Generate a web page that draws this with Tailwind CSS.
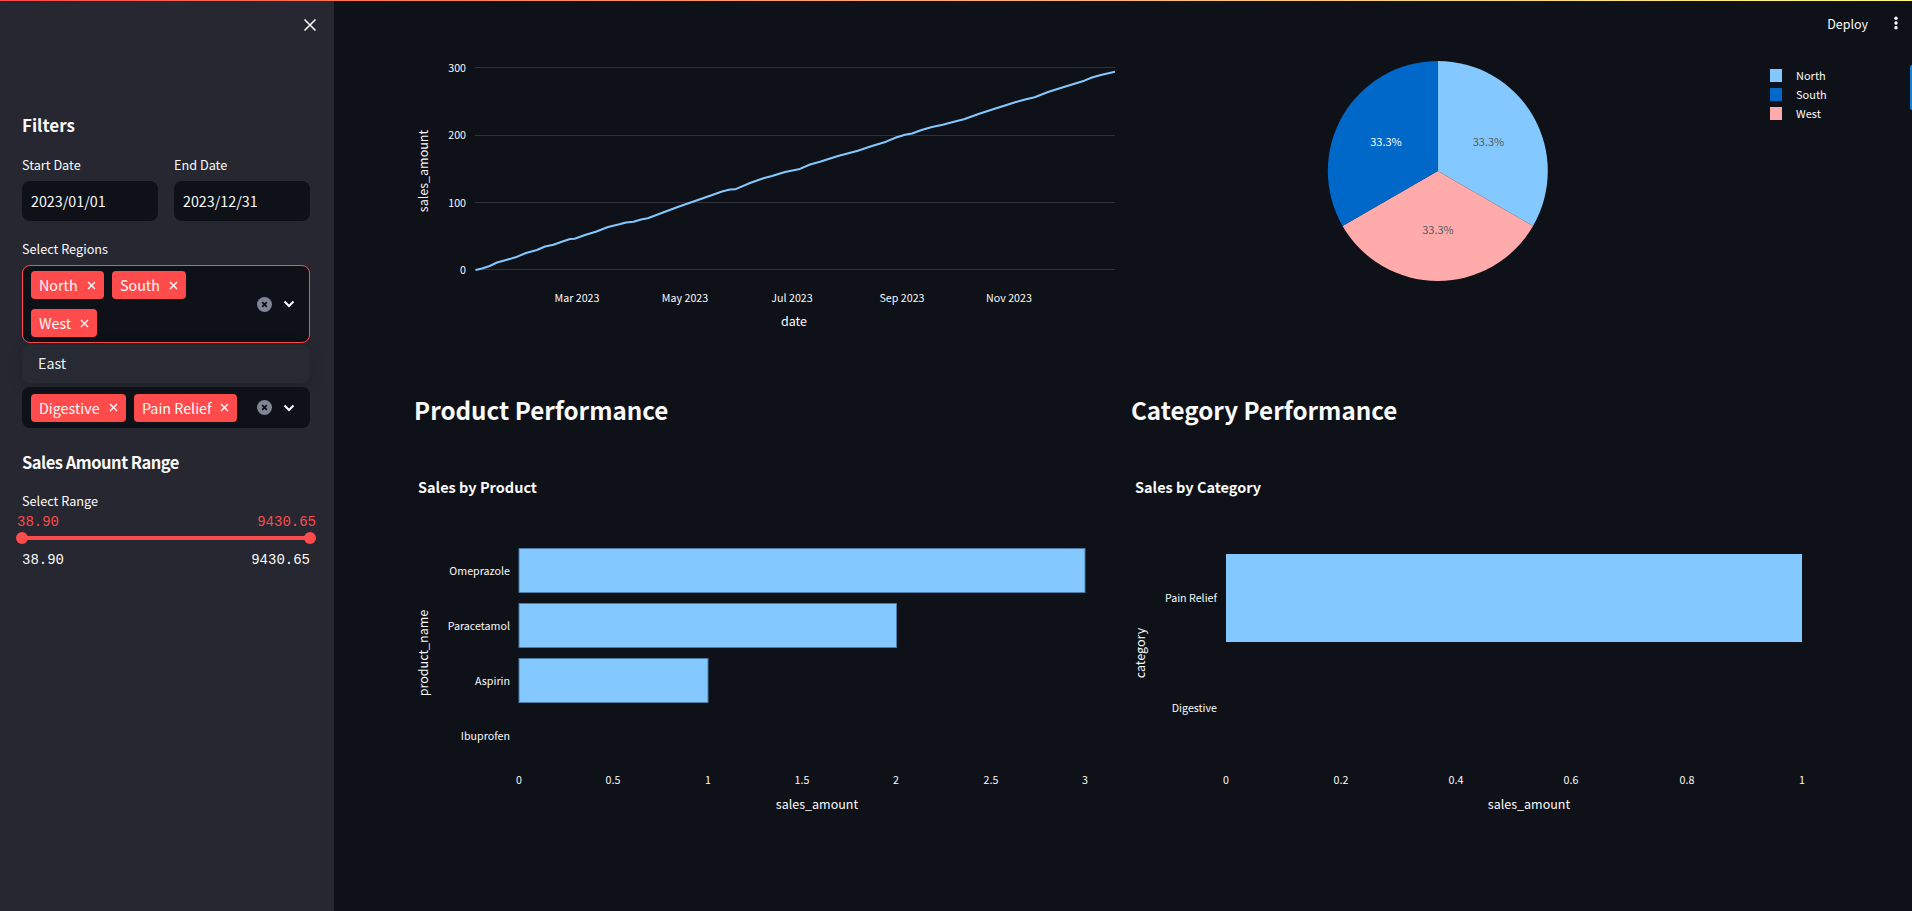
<!DOCTYPE html>
<html lang="en">
<head>
    <meta charset="UTF-8">
    <title>Sales Dashboard</title>
    <script src="https://cdn.jsdelivr.net/npm/@tailwindcss/browser@4"></script>
</head>
<body class="bg-[#0e1117] text-[#fafafa] font-['Noto_Sans_CJK_SC','Liberation_Sans',sans-serif] overflow-hidden">
    <div class="absolute top-0 left-0 w-full h-[1px] z-10 bg-gradient-to-r from-[#ff4b4b] to-[#fffd80]"></div>

    <div class="flex h-[911px] w-[1912px]">
        <!-- sidebar -->
        <aside class="relative w-[334px] shrink-0 bg-[#262730] pl-[22px] pr-[24px] pt-[109px]">
            <button class="absolute left-[303px] top-[18px]">
                <svg width="14" height="14" viewBox="0 0 14 14" fill="none" stroke="#fafafa" stroke-width="1.6"><path d="M1.5 1.5l11 11M12.5 1.5l-11 11"/></svg>
            </button>

            <h2 class="h-[32px] text-[17px] leading-[32px] font-semibold">Filters</h2>

            <div class="mt-[13px] grid grid-cols-2 gap-4">
                <div>
                    <label class="block h-[22px] mb-[5px] text-[12.7px] leading-[22px]">Start Date</label>
                    <div class="h-[40px] rounded-lg bg-[#0e1117] px-[9px] text-[14.3px] leading-[39px]">2023/01/01</div>
                </div>
                <div>
                    <label class="block h-[22px] mb-[5px] text-[12.7px] leading-[22px]">End Date</label>
                    <div class="h-[40px] rounded-lg bg-[#0e1117] px-[9px] text-[14.3px] leading-[39px]">2023/12/31</div>
                </div>
            </div>

            <label class="block mt-[17px] h-[22px] mb-[5px] text-[12.7px] leading-[22px]">Select Regions</label>
            <div class="flex h-[78px] rounded-lg border border-[#ff4b4b] bg-[#0e1117] pl-[8px] pt-[5px]">
                <div class="flex flex-wrap content-start gap-x-2 gap-y-[10px] w-[210px]">
                    <span class="flex items-center justify-between h-[28px] w-[73px] rounded bg-[#ff4b4b] pl-[8px] pr-[8px] text-[14.3px]">North
                        <svg width="9" height="9" viewBox="0 0 9 9" fill="none" stroke="#fff" stroke-width="1.4"><path d="M1 1l7 7M8 1l-7 7"/></svg>
                    </span>
                    <span class="flex items-center justify-between h-[28px] w-[74px] rounded bg-[#ff4b4b] pl-[8px] pr-[8px] text-[14.3px]">South
                        <svg width="9" height="9" viewBox="0 0 9 9" fill="none" stroke="#fff" stroke-width="1.4"><path d="M1 1l7 7M8 1l-7 7"/></svg>
                    </span>
                    <span class="flex items-center justify-between h-[28px] w-[66px] rounded bg-[#ff4b4b] pl-[8px] pr-[8px] text-[14.3px]">West
                        <svg width="9" height="9" viewBox="0 0 9 9" fill="none" stroke="#fff" stroke-width="1.4"><path d="M1 1l7 7M8 1l-7 7"/></svg>
                    </span>
                </div>
                <div class="flex items-center gap-[11px] ml-[16px] mb-[5px]">
                    <svg width="15" height="15" viewBox="0 0 15 15"><circle cx="7.5" cy="7.5" r="7.5" fill="#808495"/><path d="M5.2 5.2l4.6 4.6M9.8 5.2l-4.6 4.6" stroke="#0e1117" stroke-width="1.8"/></svg>
                    <svg width="12" height="8" viewBox="0 0 12 8" fill="none" stroke="#fafafa" stroke-width="2"><path d="M1.5 1.5L6 6l4.5-4.5"/></svg>
                </div>
            </div>

            <div class="mt-[2px] h-[38px] rounded-lg bg-[#282a33] px-[16px] text-[14.3px] leading-[35px] text-[#eeeeee] shadow-[0_4px_16px_rgba(0,0,0,0.16)]">East</div>

            <div class="relative mt-[4px] flex h-[41px] items-center rounded-lg bg-[#0e1117] pl-[9px]">
                <div class="flex gap-2 w-[210px]">
                    <span class="flex items-center justify-between h-[28px] w-[95px] rounded bg-[#ff4b4b] pl-[8px] pr-[8px] text-[14.3px]">Digestive
                        <svg width="9" height="9" viewBox="0 0 9 9" fill="none" stroke="#fff" stroke-width="1.4"><path d="M1 1l7 7M8 1l-7 7"/></svg>
                    </span>
                    <span class="flex items-center justify-between h-[28px] w-[103px] rounded bg-[#ff4b4b] pl-[8px] pr-[8px] text-[14.3px] shrink-0">Pain Relief
                        <svg width="9" height="9" viewBox="0 0 9 9" fill="none" stroke="#fff" stroke-width="1.4"><path d="M1 1l7 7M8 1l-7 7"/></svg>
                    </span>
                </div>
                <div class="flex items-center gap-[11px] ml-[16px]">
                    <svg width="15" height="15" viewBox="0 0 15 15"><circle cx="7.5" cy="7.5" r="7.5" fill="#808495"/><path d="M5.2 5.2l4.6 4.6M9.8 5.2l-4.6 4.6" stroke="#0e1117" stroke-width="1.8"/></svg>
                    <svg width="12" height="8" viewBox="0 0 12 8" fill="none" stroke="#fafafa" stroke-width="2"><path d="M1.5 1.5L6 6l4.5-4.5"/></svg>
                </div>
            </div>

            <h3 class="mt-[18px] h-[32px] text-[16.5px] leading-[32px] tracking-[-0.5px] font-semibold">Sales Amount Range</h3>
            <label class="block mt-[12px] h-[22px] text-[12.7px] leading-[22px]">Select Range</label>

            <div class="relative h-[38px] font-['Liberation_Mono',monospace] text-[14px] leading-[20px]">
                <span class="absolute left-[-5px] top-0 text-[#ff4b4b]">38.90</span>
                <span class="absolute right-[-6px] top-0 text-[#ff4b4b]">9430.65</span>
                <div class="absolute left-0 right-0 top-[24px] h-[4px] bg-[#ff4b4b]"></div>
                <div class="absolute left-[-6px] top-[20px] size-3 rounded-full bg-[#ff4b4b]"></div>
                <div class="absolute right-[-6px] top-[20px] size-3 rounded-full bg-[#ff4b4b]"></div>
            </div>
            <div class="flex justify-between font-['Liberation_Mono',monospace] text-[14px] leading-[20px]">
                <span>38.90</span>
                <span>9430.65</span>
            </div>
        </aside>

        <!-- main -->
        <main class="relative flex-1 px-20 pt-[40px]">
            <div class="absolute right-[44px] top-[13px] text-[12.5px] leading-[22px]">Deploy</div>
            <svg class="absolute right-[14px] top-[16px]" width="4" height="14" viewBox="0 0 4 14" fill="#fafafa"><circle cx="2" cy="2.2" r="1.7"/><circle cx="2" cy="7" r="1.7"/><circle cx="2" cy="11.8" r="1.7"/></svg>
            <div class="absolute right-0 top-[65px] h-[45px] w-[2px] rounded-l bg-[#1c7fd6]"></div>

            <div class="grid grid-cols-2 gap-x-4">
                <!-- cumulative line -->
                <svg class="block h-[330px] w-[701px] fill-[#fafafa] text-[10.7px]" viewBox="414 40 701 330">
                    <g stroke="#2f323a" stroke-width="1">
                        <path d="M475 67.5H1115M475 135.5H1115M475 202.5H1115M475 269.5H1115"/>
                    </g>
                    <g text-anchor="end">
                        <text x="466" y="72">300</text>
                        <text x="466" y="139">200</text>
                        <text x="466" y="207">100</text>
                        <text x="466" y="274">0</text>
                    </g>
                    <g text-anchor="middle">
                        <text x="577" y="302">Mar 2023</text>
                        <text x="685" y="302">May 2023</text>
                        <text x="792" y="302">Jul 2023</text>
                        <text x="902" y="302">Sep 2023</text>
                        <text x="1009" y="302">Nov 2023</text>
                        <text x="794" y="326" class="text-[12.5px]">date</text>
                        <text transform="translate(428 171) rotate(-90)" class="text-[12.5px]">sales_amount</text>
                    </g>
                    <polyline fill="none" stroke="#83c9ff" stroke-width="2" stroke-linejoin="round" points="475.5,270 482,268.5 489.7,266 497,262.5 506.2,260 515.6,257.3 526,253 536.9,250 545,246.5 553.4,244.7 564,241 570,239 574.6,238.7 585,235 595.8,231.7 608,227 619.4,224.3 626,222.5 633.6,221.7 641,219.5 647.8,218.3 663,212.5 678.4,206.7 695,201 711.5,195.3 722,191.5 730,189.5 735.1,189.3 750,183 763.4,178.3 772,176 785,172 798.8,169.3 810,164.5 820,161.7 838,156 857.8,150.7 872,146 886.1,141.7 896,137.5 904.9,134.7 912,133.5 921.5,130 932,127 942.7,124.7 953,122 963.9,119.3 980,113.5 997,108 1005,105.5 1015.9,102 1025,99.5 1034.7,97.3 1048,92 1060.7,88 1072,84.5 1084.3,80.7 1092,77.5 1100.8,75 1115,71.7"/>
                </svg>

                <!-- region pie -->
                <svg class="block h-[330px] w-[701px] fill-[#fafafa] text-[11px]" viewBox="1131 40 701 330">
                    <path d="M1437.8 171V61A110 110 0 0 1 1533.06 226Z" fill="#83c9ff"/>
                    <path d="M1437.8 171L1533.06 226A110 110 0 0 1 1342.54 226Z" fill="#ffabab"/>
                    <path d="M1437.8 171L1342.54 226A110 110 0 0 1 1437.8 61Z" fill="#0068c9"/>
                    <g text-anchor="middle">
                        <text x="1488.5" y="146" class="fill-[#555b66]">33.3%</text>
                        <text x="1386" y="146">33.3%</text>
                        <text x="1438" y="234" class="fill-[#555b66]">33.3%</text>
                    </g>
                    <rect x="1770" y="69" width="12" height="13" fill="#83c9ff"/>
                    <rect x="1770" y="88" width="12" height="13" fill="#0068c9"/>
                    <rect x="1770" y="107" width="12" height="13" fill="#ffabab"/>
                    <text x="1796" y="80">North</text>
                    <text x="1796" y="99">South</text>
                    <text x="1796" y="118">West</text>
                </svg>

                <h2 class="h-[80px] text-[24.2px] leading-[79px] font-semibold">Product Performance</h2>
                <h2 class="h-[80px] text-[24.2px] leading-[79px] font-semibold">Category Performance</h2>

                <!-- product bars -->
                <svg class="block h-[380px] w-[701px] fill-[#fafafa] text-[10.7px]" viewBox="414 450 701 380">
                    <text x="418" y="493" class="text-[14.5px] font-bold">Sales by Product</text>
                    <g fill="#83c9ff" stroke="#4a7ba5" stroke-width="1">
                        <rect x="519" y="548.5" width="566" height="44"/>
                        <rect x="519" y="603.5" width="377.5" height="44"/>
                        <rect x="519" y="658.5" width="189" height="44"/>
                    </g>
                    <g text-anchor="end">
                        <text x="510" y="575">Omeprazole</text>
                        <text x="510" y="630">Paracetamol</text>
                        <text x="510" y="685">Aspirin</text>
                        <text x="510" y="740">Ibuprofen</text>
                    </g>
                    <g text-anchor="middle">
                        <text x="519" y="784">0</text>
                        <text x="613" y="784">0.5</text>
                        <text x="708" y="784">1</text>
                        <text x="802" y="784">1.5</text>
                        <text x="896" y="784">2</text>
                        <text x="991" y="784">2.5</text>
                        <text x="1085" y="784">3</text>
                        <text x="817" y="809" class="text-[12.5px]">sales_amount</text>
                        <text transform="translate(428 653) rotate(-90)" class="text-[12.5px]">product_name</text>
                    </g>
                </svg>

                <!-- category bars -->
                <svg class="block h-[380px] w-[701px] fill-[#fafafa] text-[10.7px]" viewBox="1131 450 701 380">
                    <text x="1135" y="493" class="text-[14.5px] font-bold">Sales by Category</text>
                    <rect x="1226" y="554" width="576" height="88" fill="#83c9ff"/>
                    <g text-anchor="end">
                        <text x="1217" y="602">Pain Relief</text>
                        <text x="1217" y="712">Digestive</text>
                    </g>
                    <g text-anchor="middle">
                        <text x="1226" y="784">0</text>
                        <text x="1341" y="784">0.2</text>
                        <text x="1456" y="784">0.4</text>
                        <text x="1571" y="784">0.6</text>
                        <text x="1687" y="784">0.8</text>
                        <text x="1802" y="784">1</text>
                        <text x="1529" y="809" class="text-[12.5px]">sales_amount</text>
                        <text transform="translate(1145 653) rotate(-90)" class="text-[12.5px]">category</text>
                    </g>
                </svg>
            </div>
        </main>
    </div>
</body>
</html>
